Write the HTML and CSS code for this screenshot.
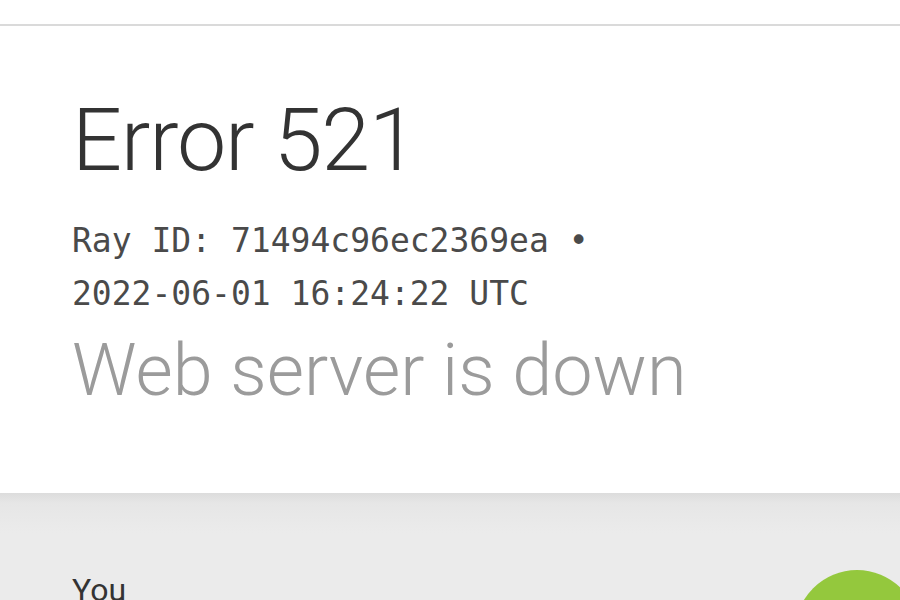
FILE: index.html
```html
<!DOCTYPE html>
<html>
<head>
<meta charset="utf-8">
<link rel="stylesheet" href="styles.css">
</head>
<body>
<div class="topbar"></div>
<main class="card">
  <h1 class="title">Error 521</h1>
  <p class="ray">Ray ID: 71494c96ec2369ea •<br>2022-06-01 16:24:22 UTC</p>
  <h2 class="subtitle">Web server is down</h2>
</main>
<section class="status">
  <div class="status-row">
    <span class="you">You</span>
    <span class="dot"></span>
  </div>
</section>
</body>
</html>
```
FILE: styles.css
```css
html, body {
  margin: 0;
  padding: 0;
  width: 900px;
  height: 600px;
  overflow: hidden;
  background: #fff;
  font-family: Roboto, "Liberation Sans", sans-serif;
}
.topbar {
  height: 24px;
  background: #fff;
  border-bottom: 2px solid #dadada;
  box-shadow: 0 1px 2px rgba(0,0,0,0.06);
}
.card {
  height: 467px;
  padding: 0 72px;
  box-sizing: border-box;
  display: flex;
  flex-direction: column;
  background: #fff;
}
.title {
  margin: 70px 0 0;
  font-size: 88px;
  line-height: 1;
  font-weight: 300;
  color: #333;
  letter-spacing: -1.2px;
}
.ray {
  margin: 30px 0 0;
  font-family: "DejaVu Sans Mono", monospace;
  font-size: 33px;
  line-height: 53px;
  color: #4a4a4a;
}
.subtitle {
  margin: 15px 0 0;
  font-size: 72px;
  line-height: 1;
  font-weight: 300;
  color: #9b9b9b;
}
.status {
  height: 107px;
  background: linear-gradient(#dcdcdc 0px, #e6e6e6 10px, #ebebeb 40px, #ebebeb);
  padding: 77px 0 0 72px;
  box-sizing: border-box;
}
.status-row {
  display: flex;
  justify-content: space-between;
  align-items: flex-start;
}
.you {
  margin-top: 4px;
  font-size: 32px;
  line-height: 1;
  color: #333;
}
.dot {
  width: 124px;
  height: 124px;
  border-radius: 50%;
  background: #94c83d;
  margin-right: -19px;
  flex: none;
}
```
